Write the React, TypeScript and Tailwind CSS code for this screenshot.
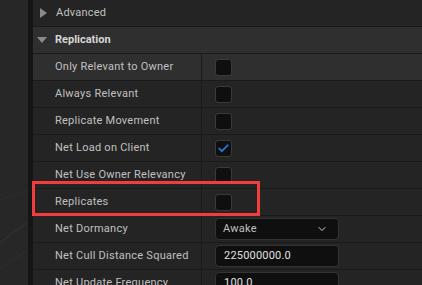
import { Check, ChevronDown } from 'lucide-react';

const font = { fontFamily: 'Roboto, "Noto Sans", sans-serif' };

type Prop = {
  name: string;
  kind: 'check' | 'select' | 'text';
  checked?: boolean;
  value?: string;
  hover?: boolean;
};

const props: Prop[] = [
  { name: 'Only Relevant to Owner', kind: 'check', hover: true },
  { name: 'Always Relevant', kind: 'check' },
  { name: 'Replicate Movement', kind: 'check' },
  { name: 'Net Load on Client', kind: 'check', checked: true },
  { name: 'Net Use Owner Relevancy', kind: 'check' },
  { name: 'Replicates', kind: 'check' },
  { name: 'Net Dormancy', kind: 'select', value: 'Awake' },
  { name: 'Net Cull Distance Squared', kind: 'text', value: '225000000.0' },
  { name: 'Net Update Frequency', kind: 'text', value: '100.0' },
];

function Checkbox({ checked }: { checked?: boolean }) {
  return (
    <div className="w-[17px] h-[17px] rounded-[3px] bg-[#0f0f0f] border border-[#3a3a3a] flex items-center justify-center">
      {checked && <Check size={13} strokeWidth={3.2} className="text-[#1f80e6]" />}
    </div>
  );
}

function PropRow({ p }: { p: Prop }) {
  const bg = p.hover ? 'bg-[#2f2f2f]' : 'bg-[#242424]';
  return (
    <div className="flex h-[26px] shrink-0 gap-px">
      <div className={`w-[168px] flex items-center pl-[22px] text-[11px] tracking-[0.25px] text-[#c0c0c0] ${bg}`}>{p.name}</div>
      <div className={`flex-1 flex items-center pl-[13px] ${bg}`}>
        {p.kind === 'check' && <Checkbox checked={p.checked} />}
        {p.kind === 'select' && (
          <div className="w-[124px] h-[22px] rounded-[4px] bg-[#0f0f0f] border border-[#333] flex items-center justify-between pl-[7px] pr-[10px] text-[11px] tracking-[0.25px] text-[#c0c0c0]">
            <span>{p.value}</span>
            <ChevronDown size={12} strokeWidth={2} className="text-[#d0d0d0]" />
          </div>
        )}
        {p.kind === 'text' && (
          <div className="w-[124px] h-[22px] rounded-[4px] bg-[#0f0f0f] border border-[#333] flex items-center pl-[8px] text-[11px] tracking-[0.2px] text-[#e0e0e0]">
            {p.value}
          </div>
        )}
      </div>
    </div>
  );
}

export default function App() {
  return (
    <div className="w-[422px] h-[285px] flex overflow-hidden bg-[#1a1a1a] relative" style={font}>
      {/* viewport edge behind the panel */}
      <div className="w-[28px] bg-[#272727] relative overflow-hidden">
        <svg width="28" height="285" className="absolute inset-0">
          <path d="M-10 250 Q 10 235 28 222" stroke="#3a3a3a" strokeWidth="1" fill="none" opacity="0.7" />
          <path d="M-10 275 Q 10 262 28 250" stroke="#353535" strokeWidth="1" fill="none" opacity="0.6" />
          <path d="M0 200 L 28 190" stroke="#333" strokeWidth="1" fill="none" opacity="0.5" />
        </svg>
      </div>
      <div className="w-[5px] bg-[#151515]" />

      <div className="flex-1 flex flex-col gap-px bg-[#1a1a1a]">
        <div className="h-[26px] shrink-0 bg-[#242424] flex items-center pl-[7px] text-[11px] tracking-[0.2px] text-[#c0c0c0]">
          <svg width="7" height="10" viewBox="0 0 7 10" className="mr-[9px]">
            <path d="M0 0 L7 5 L0 10 Z" fill="#8a8a8a" />
          </svg>
          Advanced
        </div>
        <div className="h-[26px] shrink-0 bg-[#2f2f2f] flex items-center pl-[4px] text-[11px] font-bold text-[#d6d6d6]">
          <svg width="10" height="7" viewBox="0 0 10 7" className="mr-[8px]">
            <path d="M0 0 L10 0 L5 6 Z" fill="#8a8a8a" />
          </svg>
          Replication
        </div>
        {props.map((p) => (
          <PropRow key={p.name} p={p} />
        ))}
      </div>

      <div className="absolute left-[32px] top-[181px] w-[228px] h-[35px] border-[3px] border-[#f23d3d] pointer-events-none" />
    </div>
  );
}
